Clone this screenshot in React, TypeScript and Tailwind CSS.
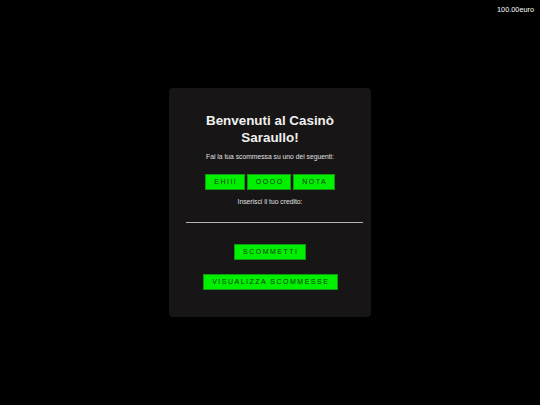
import React from "react";

const btn =
  "h-[16px] bg-[#00f000] border border-[#109a10] text-[#123212] text-[7px] tracking-[1.5px] leading-none flex items-center justify-center pl-[1.5px]";

export default function App() {
  return (
    <div
      className="relative w-[540px] h-[405px] bg-black flex items-center justify-center overflow-hidden"
      style={{ fontFamily: '"Liberation Sans", Arial, sans-serif' }}
    >
      <div className="absolute top-[5px] right-[6px] text-[7.3px] leading-[10px] text-white">
        100.00euro
      </div>
      <div className="w-[202px] h-[229px] bg-[#171515] rounded-[4px] flex flex-col items-stretch pt-[24px]">
        <h1 className="text-center text-[13.4px] leading-[17px] font-bold text-[#f0f0f0]">
          Benvenuti al Casinò
          <br />
          Saraullo!
        </h1>
        <p className="mt-[6px] text-center text-[6.75px] leading-[9px] text-[#e0e0e0]">
          Fai la tua scommessa su uno dei seguenti:
        </p>
        <div className="mt-[12.5px] flex justify-center gap-[2px]">
          <div className={btn + " w-[40px]"}>EHIII</div>
          <div className={btn + " w-[44px]"}>OOOO</div>
          <div className={btn + " w-[42px]"}>NOTA</div>
        </div>
        <p className="mt-[7.5px] text-center text-[6.75px] leading-[9px] text-[#e0e0e0]">
          Inserisci il tuo credito:
        </p>
        <div className="mt-[15.5px] ml-[17px] w-[177px] h-px bg-[#b4b4b4]" />
        <div className="mt-[21px] flex justify-center">
          <div className={btn + " w-[72px]"}>SCOMMETTI</div>
        </div>
        <div className="mt-[14px] flex justify-center">
          <div className={btn + " w-[135px]"}>VISUALIZZA SCOMMESSE</div>
        </div>
      </div>
    </div>
  );
}
